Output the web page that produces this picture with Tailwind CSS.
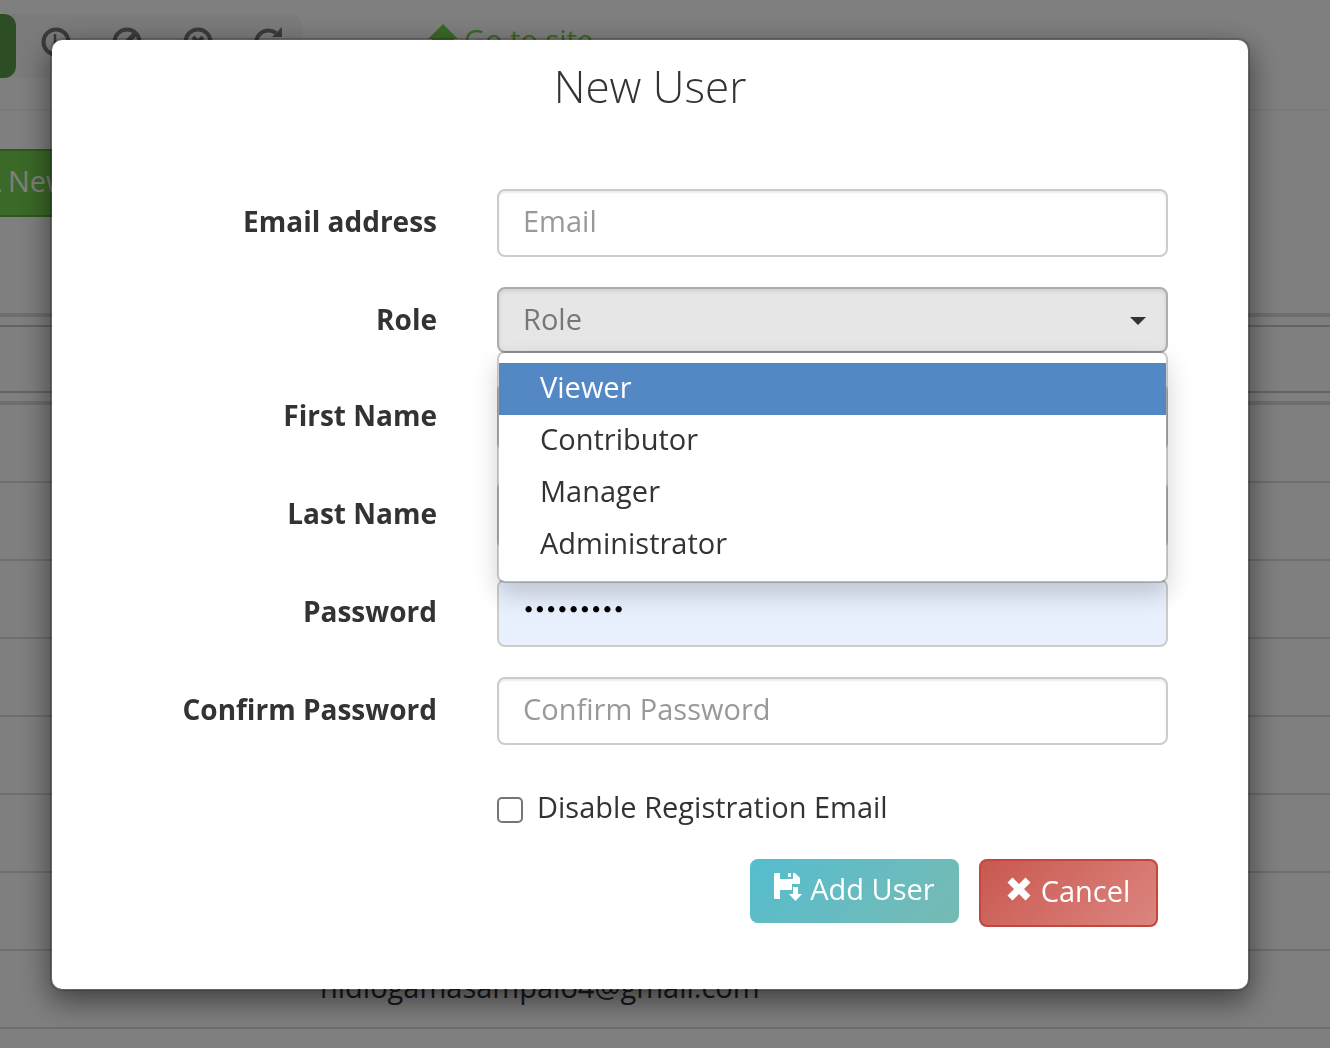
<!DOCTYPE html>
<html lang="en">
  <head>
    <meta charset="UTF-8" />
    <meta name="viewport" content="width=device-width, initial-scale=1.0" />
    <title>New User</title>
    <script src="https://cdn.jsdelivr.net/npm/@tailwindcss/browser@4"></script>
  </head>

  <body class="h-screen overflow-hidden bg-white font-['Open_Sans',sans-serif] text-[29px] leading-10 text-[#333]">
    <!-- Users page -->
    <div aria-hidden="true">
      <header class="flex items-start h-[111px] pt-[14px] border-b-2 border-[#f3f3f3]">
        <div class="flex h-16 w-[302px] rounded-r-xl bg-[#f6f6f6] text-[#777]">
          <div class="w-4 rounded-r-xl bg-[#5a9a48]"></div>
          <div class="flex pl-[25px] pt-[13px] gap-[41px]">
            <svg class="size-[30px]" viewBox="0 0 30 30" fill="none" stroke="currentColor" stroke-width="4"><circle cx="15" cy="15" r="12.5" /><path d="M14 7v9l5 4" stroke-width="2.5" /></svg>
            <svg class="size-[30px]" viewBox="0 0 30 30" fill="none" stroke="currentColor" stroke-width="4"><circle cx="15" cy="15" r="12.5" /><path d="M6 24 24 6" stroke-width="5" /></svg>
            <svg class="size-[30px]" viewBox="0 0 30 30" fill="none" stroke="currentColor" stroke-width="4"><circle cx="15" cy="15" r="12.5" /><path d="m10 10 10 10M20 10 10 20" /></svg>
            <svg class="size-[30px]" viewBox="0 0 30 30"><path d="M22 6A12.500 12.500 0 1 0 26 21" fill="none" stroke="currentColor" stroke-width="4" /><path d="M28 0v10H18z" fill="currentColor" /></svg>
          </div>
        </div>
        <a href="#" class="flex ml-[126px] pt-[6px] gap-1 text-[#74d24c]">
          <svg class="mt-1 w-8 h-7" viewBox="0 0 32 28" fill="currentColor"><path d="M15 0 0 15h4v12h8v-8h6v8h8V15h4z" /></svg>
          Go to site
        </a>
      </header>

      <div class="h-[202px] pt-[38px]">
        <button tabindex="-1" class="flex w-48 h-[68px] -ml-6 pt-[10px] border-2 border-[#5eae3e] bg-[#76d24e] text-white">
          <svg class="w-6 h-7 mt-1 mr-[6px]" viewBox="0 0 24 28" fill="currentColor"><circle cx="11" cy="8" r="7" /><path d="M0 27c0-6 5-8 11-8s12 2 12 8z" /></svg>
          New User
        </button>
      </div>

      <div class="border-t-4 border-[#ddd] h-3"></div>
      <div class="border-y-2 border-[#c8c8c8] h-[68px]"></div>
      <div class="h-3 border-b-4 border-[#ddd]"></div>
      <div class="h-[78px] border-b-2 border-[#ddd]"></div>
      <div class="h-[78px] border-b-2 border-[#ddd]"></div>
      <div class="h-[78px] border-b-2 border-[#ddd]"></div>
      <div class="h-[78px] border-b-2 border-[#ddd]"></div>
      <div class="h-[78px] border-b-2 border-[#ddd]"></div>
      <div class="h-[78px] border-b-2 border-[#ddd]"></div>
      <div class="h-[78px] border-b-2 border-[#ddd]"></div>
      <div class="h-[78px] border-b-2 border-[#ddd] pl-[320px] pt-4">nidiogamasampaio4@gmail.com</div>
    </div>

    <!-- Modal -->
    <div class="fixed inset-0 bg-black/50 pt-[38px] pl-[50px] pr-20">
      <div role="dialog" aria-labelledby="title" class="rounded-xl border-2 border-black/20 bg-white bg-clip-padding shadow-[0_10px_30px_rgba(0,0,0,0.5)] pb-[62px]">
        <h1 id="title" class="pt-4 pb-[73px] text-center text-[44px] leading-[60px] font-light">New User</h1>

        <form class="pr-20">
          <div class="grid grid-cols-[385px_1fr] gap-x-[60px] gap-y-[30px]">
            <label for="email" class="pt-3 text-right text-[28px] font-bold">Email address</label>
            <input id="email" type="email" placeholder="Email" class="h-[68px] w-full rounded-lg border-2 border-[#ccc] px-6 pb-[6px] shadow-[inset_0_2px_2px_rgba(0,0,0,0.075)] placeholder:text-[#999]" />

            <label for="role" class="pt-3 text-right text-[28px] font-bold">Role</label>
            <div class="relative">
              <select id="role" class="block h-[66px] w-full appearance-none rounded-lg border-2 border-[#adadad] bg-[#e6e6e6] px-6 pb-[2px] text-[#777] shadow-[inset_0_2px_4px_rgba(0,0,0,0.1)]">
                <option>Role</option>
              </select>
              <svg class="pointer-events-none absolute right-[22px] top-[30px] h-2 w-4" viewBox="0 0 16 8" fill="#333"><path d="M0 0h16L8 8z" /></svg>
              <ul role="listbox" aria-label="Role" class="absolute inset-x-0 top-16 z-10 rounded-lg border-2 border-black/20 bg-white bg-clip-padding py-[10px] shadow-[0_12px_24px_rgba(0,0,0,0.175)]">
                <li role="option" aria-selected="true" class="h-[52px] bg-[#5488c4] pl-[41px] pt-1 text-white">Viewer</li>
                <li role="option" class="h-[52px] pl-[41px] pt-1">Contributor</li>
                <li role="option" class="h-[52px] pl-[41px] pt-1">Manager</li>
                <li role="option" class="h-[52px] pl-[41px] pt-1">Administrator</li>
              </ul>
            </div>

            <label for="first" class="pt-3 text-right text-[28px] font-bold">First Name</label>
            <input id="first" type="text" class="h-[68px] w-full rounded-lg border-2 border-[#ccc] px-6" />

            <label for="last" class="pt-3 text-right text-[28px] font-bold">Last Name</label>
            <input id="last" type="text" class="h-[68px] w-full rounded-lg border-2 border-[#ccc] px-6" />

            <label for="password" class="pt-3 text-right text-[28px] font-bold">Password</label>
            <input id="password" type="password" value="password1" class="h-[68px] w-full rounded-lg border-2 border-[#ccc] bg-[#e8f0fe] px-6 pb-[10px] font-[Inter,sans-serif] text-xl text-black" />

            <label for="confirm" class="pt-3 text-right text-[28px] font-bold">Confirm Password</label>
            <input id="confirm" type="password" placeholder="Confirm Password" class="h-[68px] w-full rounded-lg border-2 border-[#ccc] px-6 pb-[6px] shadow-[inset_0_2px_2px_rgba(0,0,0,0.075)] placeholder:text-[#999]" />
          </div>

          <div class="ml-[445px] mt-[42px] flex">
            <input id="disable" type="checkbox" class="mt-[10px] mr-[14px] size-[26px] appearance-none rounded-[5px] border-2 border-[#767676] bg-white" />
            <label for="disable">Disable Registration Email</label>
          </div>

          <div class="mt-8 flex items-start justify-end gap-5 pr-[10px] text-white">
            <button type="submit" class="flex h-16 w-[209px] items-start justify-center gap-2 rounded-lg bg-linear-135 from-[#54bdcf] to-[#76bab3] pt-[10px]">
              <svg class="mt-1 h-7 w-7" viewBox="0 0 28 28" fill="currentColor"><path d="M1 0h5v6h13V0h2l5 5v6h-8v6H6v9H1a1 1 0 0 1-1-1V1a1 1 0 0 1 1-1zM14 0h3v4h-3zM19 14h5v7h4l-6.500 7-6.500-7h4z" /></svg>
              Add User
            </button>
            <button type="button" class="flex h-[68px] w-[179px] items-start justify-center gap-[10px] rounded-lg border-2 border-[#c3473f] bg-linear-135 from-[#c85850] to-[#dc857f] pt-[10px]">
              <svg class="mt-[6px] size-6" viewBox="0 0 24 24" fill="currentColor"><path d="M5.500.500 12 7l6.500-6.500 5 5L17 12l6.500 6.500-5 5L12 17l-6.500 6.500-5-5L7 12 .500 5.500z" /></svg>
              Cancel
            </button>
          </div>
        </form>
      </div>
    </div>
  </body>
</html>
